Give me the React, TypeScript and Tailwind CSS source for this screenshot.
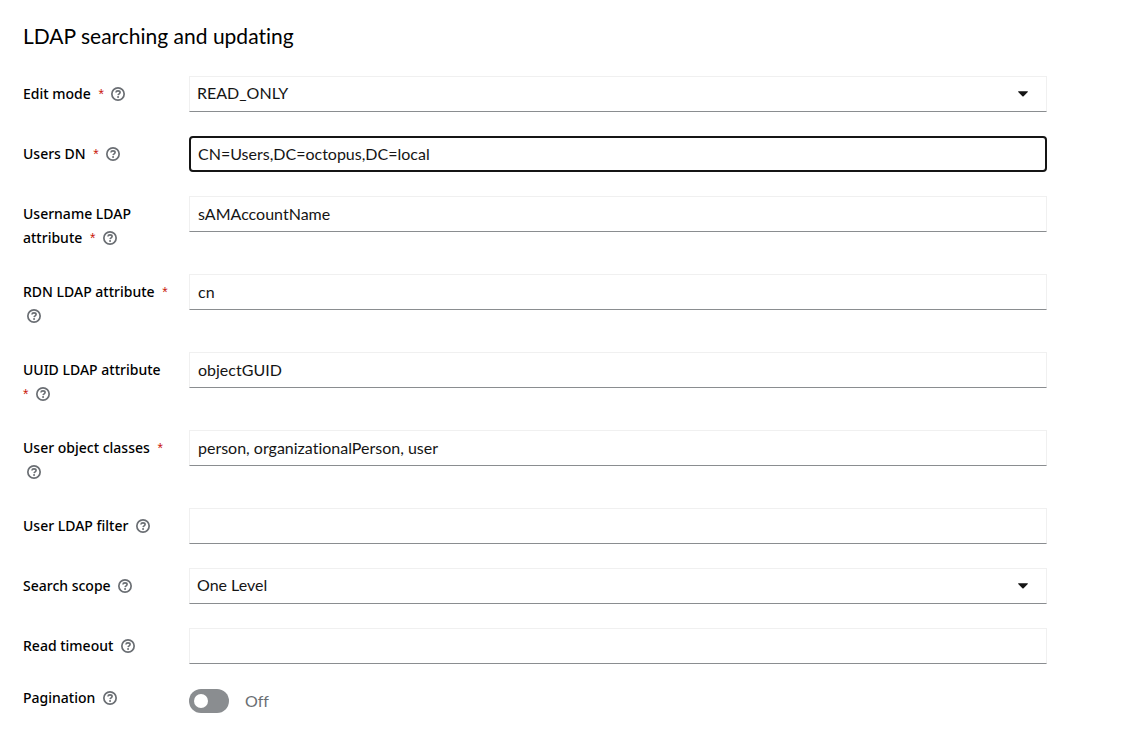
import React, { useId, useState, type ReactNode } from 'react';

const fieldBase = 'block h-9 w-full bg-white pb-0.5 text-base text-[#151515]';
const fieldPlain = 'rounded-none border border-[#f0f0f0] border-b-[#8a8d90]';
const fieldActive = 'rounded-sm border-2 border-[#151515] px-[7px] outline-none';

function HelpIcon() {
  return (
    <svg viewBox="0 0 14 14" className="size-3.5" fill="none" aria-hidden="true">
      <circle cx="7" cy="7" r="6.15" stroke="#6a6e73" strokeWidth="1.7" />
      <path
        d="M4.900 5.500C5 4.400 5.900 3.900 7 3.900c1.200 0 2.100.6 2.100 1.600C9.100 6.800 7.200 6.800 7.100 8.100"
        stroke="#6a6e73"
        strokeWidth="1.600"
      />
      <circle cx="7.050" cy="9.900" r="1" fill="#6a6e73" />
    </svg>
  );
}

type RowProps = {
  label: string;
  required?: boolean;
  compact?: boolean;
  children: (id: string) => ReactNode;
};

function FormRow({ label, required, compact, children }: RowProps) {
  const id = useId();
  return (
    <div className="grid grid-cols-[150px_minmax(0,1fr)] gap-x-4">
      <div className={compact ? 'text-sm leading-5' : 'pt-1.5 text-sm leading-6'}>
        <label htmlFor={id}>
          <span className={`font-['Noto_Sans',sans-serif] font-medium text-black ${required ? 'mr-1' : ''}`}>{label}</span>
          {required && (
            <>
              {' '}
              <span className="font-['Liberation_Sans',sans-serif] text-[#c9190b]" aria-hidden="true">*</span>
            </>
          )}
        </label>{' '}
        <button type="button" aria-label={`Help for ${label}`} className="inline-flex px-1 align-[-2px] leading-none">
          <HelpIcon />
        </button>
      </div>
      <div>{children(id)}</div>
    </div>
  );
}

type FieldProps = { label: string; value?: string; required?: boolean; active?: boolean };

function Field({ label, value = '', required, active }: FieldProps) {
  const [text, setText] = useState(value);
  return (
    <FormRow label={label} required={required}>
      {(id) => (
        <input
          id={id}
          type="text"
          value={text}
          required={required}
          onChange={(e) => setText(e.target.value)}
          className={`${fieldBase} ${active ? fieldActive : `${fieldPlain} px-2`}`}
        />
      )}
    </FormRow>
  );
}

function Choice({ label, options, required }: { label: string; options: string[]; required?: boolean }) {
  return (
    <FormRow label={label} required={required}>
      {(id) => (
        <div className="relative">
          <select id={id} required={required} className={`${fieldBase} ${fieldPlain} appearance-none px-[7px]`}>
            {options.map((o) => (
              <option key={o}>{o}</option>
            ))}
          </select>
          <svg viewBox="0 0 10 6" className="pointer-events-none absolute top-[15px] right-[19px] h-1.5 w-2.5" aria-hidden="true">
            <path d="M.6.2h8.800c.5 0 .7.5.4.8L5.600 5.200a.9.9 0 0 1-1.200 0L.2 1C-.1.700.1.200.6.200Z" fill="#151515" />
          </svg>
        </div>
      )}
    </FormRow>
  );
}

export default function App() {
  const [paginated, setPaginated] = useState(false);
  return (
    <main className="bg-white pt-6 pr-[82px] pb-7 pl-[23px] font-['Lato',sans-serif] text-[#151515] [font-variant-ligatures:none]">
      <h1 className="text-[21px] leading-6 text-black">LDAP searching and updating</h1>
      <form className="mt-7 flex flex-col gap-6">
        <Choice label="Edit mode" required options={['READ_ONLY', 'WRITABLE', 'UNSYNCED']} />
        <Field label="Users DN" required active value="CN=Users,DC=octopus,DC=local" />
        <Field label="Username LDAP attribute" required value="sAMAccountName" />
        <Field label="RDN LDAP attribute" required value="cn" />
        <Field label="UUID LDAP attribute" required value="objectGUID" />
        <Field label="User object classes" required value="person, organizationalPerson, user" />
        <Field label="User LDAP filter" />
        <Choice label="Search scope" required={false} options={['One Level', 'Subtree']} />
        <Field label="Read timeout" />
        <FormRow label="Pagination" compact>
          {(id) => (
            <div className="flex items-center gap-4 pt-px text-base leading-6 text-[#6a6e73]">
              <input
                id={id}
                type="checkbox"
                role="switch"
                checked={paginated}
                onChange={(e) => setPaginated(e.target.checked)}
                className="h-6 w-10 appearance-none rounded-full bg-[#8a8d90] p-[5px] before:block before:size-3.5 before:rounded-full before:bg-white checked:bg-[#0066cc] checked:before:ml-4"
              />
              <span>{paginated ? 'On' : 'Off'}</span>
            </div>
          )}
        </FormRow>
      </form>
    </main>
  );
}
